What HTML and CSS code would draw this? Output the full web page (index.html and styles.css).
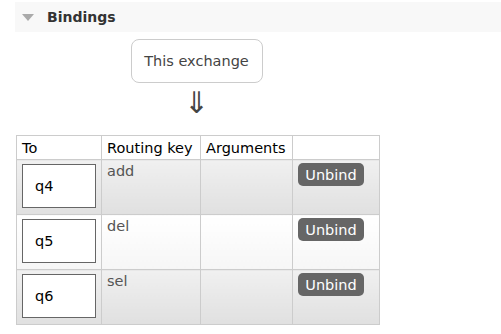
FILE: index.html
```html
<!DOCTYPE html>
<html lang="en">
<head>
    <meta charset="UTF-8">
    <title>Bindings</title>
    <link rel="stylesheet" href="styles.css">
</head>
<body>
    <div class="section">
        <h2 class="section-title"><span class="toggle"></span>Bindings</h2>
        <div class="section-body">
            <div class="bindings-wrapper">
                <div class="source-box">This exchange</div>
                <div class="arrow">&#8659;</div>
            </div>
            <table class="list">
                <thead>
                    <tr>
                        <th class="col-to">To</th>
                        <th class="col-key">Routing key</th>
                        <th class="col-args">Arguments</th>
                        <th class="col-act"></th>
                    </tr>
                </thead>
                <tbody>
                    <tr class="alt1">
                        <td><span class="queue-box">q4</span></td>
                        <td>add</td>
                        <td></td>
                        <td><button class="unbind">Unbind</button></td>
                    </tr>
                    <tr class="alt2">
                        <td><span class="queue-box">q5</span></td>
                        <td>del</td>
                        <td></td>
                        <td><button class="unbind">Unbind</button></td>
                    </tr>
                    <tr class="alt1">
                        <td><span class="queue-box">q6</span></td>
                        <td>sel</td>
                        <td></td>
                        <td><button class="unbind">Unbind</button></td>
                    </tr>
                </tbody>
            </table>
        </div>
    </div>
</body>
</html>
```

FILE: styles.css
```css
        body {
            font-family: "DejaVu Sans", Verdana, sans-serif;
            font-size: 14.5px;
            color: #555;
            background: #fff;
            margin: 0;
            padding: 2px 0 0 15px;
        }
        .section-title {
            display: flex;
            align-items: center;
            height: 30px;
            margin: 0;
            padding: 0 0 0 7px;
            background: #f8f8f8;
            font-size: 14px;
            font-weight: bold;
            color: #333;
        }
        .toggle {
            width: 0;
            height: 0;
            border-left: 6px solid transparent;
            border-right: 6px solid transparent;
            border-top: 7px solid #aaa;
            margin: 1px 13px 0 0;
        }
        .section-body {
            padding: 7px 0 0 1px;
        }
        .bindings-wrapper {
            display: flex;
            flex-direction: column;
            align-items: center;
            width: 363px;
        }
        .source-box {
            width: 130px;
            height: 42px;
            line-height: 42px;
            text-align: center;
            border: 1px solid #ccc;
            border-radius: 8px;
            color: #444;
            font-size: 14.5px;
            margin-left: -2px;
        }
        .arrow {
            font-size: 30px;
            line-height: 30px;
            color: #444;
            height: 52px;
            padding-top: 5px;
            box-sizing: border-box;
            margin-left: -2px;
        }
        table.list {
            border-collapse: collapse;
        }
        table.list th,
        table.list td {
            border: 1px solid #ccc;
            text-align: left;
            vertical-align: top;
            padding: 3px 5px 0 5px;
            font-weight: normal;
        }
        table.list th {
            color: #000;
            height: 20px;
            line-height: 19px;
            padding-top: 3px;
            background: #fff;
        }
        .col-to { width: 74px; }
        .col-key { width: 88px; }
        .col-args { width: 81px; }
        .col-act { width: 76px; }
        table.list td {
            height: 51px;
            line-height: 17px;
        }
        tr.alt1 td {
            background: linear-gradient(#f0f0f0, #e0e0e0);
        }
        tr.alt2 td {
            background: linear-gradient(#ffffff, #f6f6f6);
        }
        .queue-box {
            display: block;
            width: 60px;
            height: 42px;
            line-height: 42px;
            padding-left: 12px;
            background: #fff;
            border: 1px solid #666;
            color: #000;
            font-size: 14.5px;
            margin-top: 1px;
        }
        .unbind {
            display: block;
            margin: 0;
            width: 66px;
            height: 23px;
            padding: 0;
            border: none;
            border-radius: 5px;
            background: #666;
            color: #fff;
            font-family: "DejaVu Sans", Verdana, sans-serif;
            font-size: 14.5px;
        }
```
